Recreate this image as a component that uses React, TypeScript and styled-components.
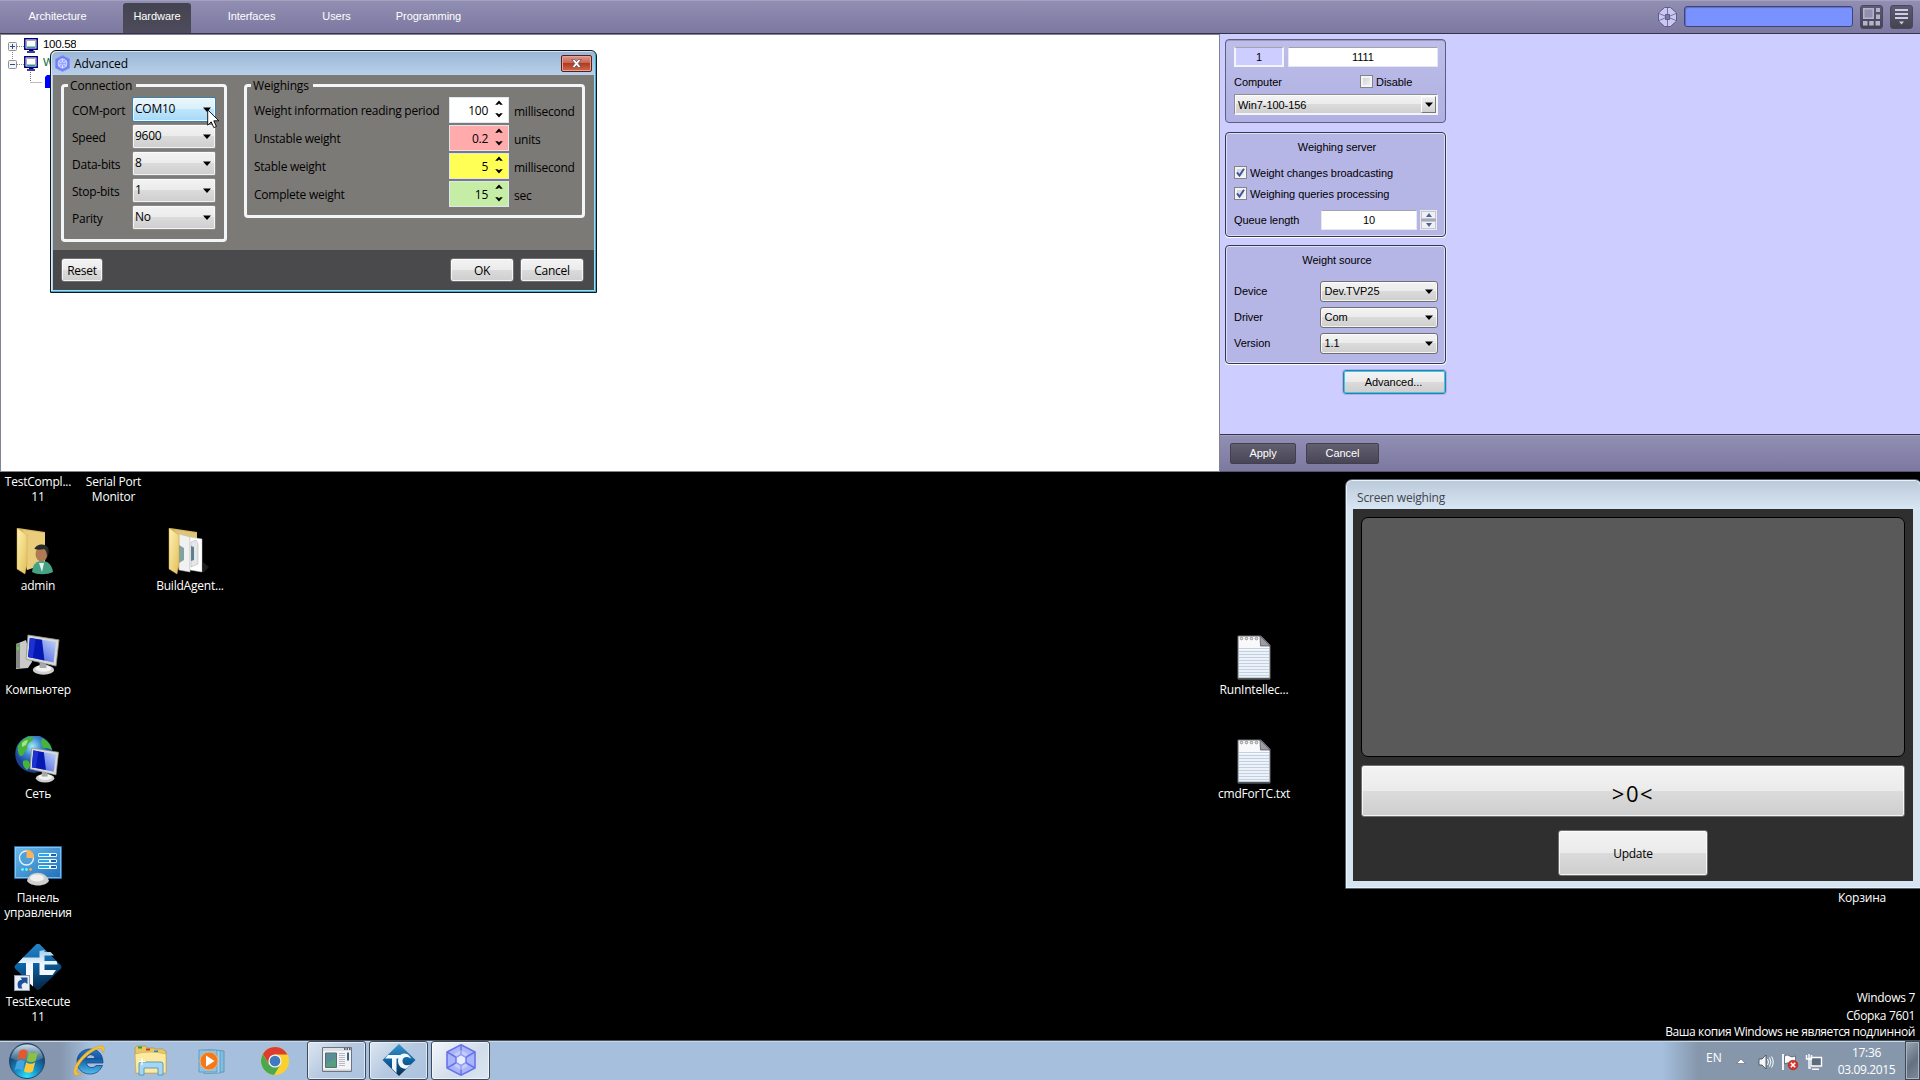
import React from "react";
import styled, { createGlobalStyle, css } from "styled-components";

const Global = createGlobalStyle`
  * { box-sizing: border-box; }
  html, body { margin: 0; padding: 0; background: #000; overflow: hidden; }
`;

const sans = `"Liberation Sans", Arial, sans-serif`;
const segoe = `"Open Sans", "Noto Sans", sans-serif`;

const glossy = css`
  background: linear-gradient(#f3f3f3 0%, #ebebeb 49%, #dbdbdb 50%, #cecece 100%);
  box-shadow: inset 0 0 0 1px rgba(255, 255, 255, 0.75);
`;

/* ---------- Desktop ---------- */
const Screen = styled.div`
  position: relative;
  width: 1920px;
  height: 1080px;
  background: #000;
  overflow: hidden;
  display: flex;
  flex-direction: column;
  font-family: ${segoe};
  font-size: 12px;
`;
const DesktopArea = styled.div`
  flex: 1;
`;
const Shortcut = styled.div<{ $x: number; $y: number }>`
  position: absolute;
  left: ${(p) => p.$x - 45}px;
  top: ${(p) => p.$y}px;
  width: 90px;
  display: flex;
  flex-direction: column;
  align-items: center;
`;
const ShortcutLabel = styled.span`
  color: #fff;
  font-size: 12px;
  line-height: 15px;
  text-align: center;
  white-space: pre;
  letter-spacing: -0.22px;
`;
const Art = styled.div`
  width: 48px;
  height: 48px;
  margin-bottom: 2px;
`;

/* ---------- Configuration window ---------- */
const AppWindow = styled.div`
  height: 472px;
  display: flex;
  flex-direction: column;
  font-family: ${sans};
  font-size: 11px;
  letter-spacing: -0.06px;
  color: #000;
`;
const TopBar = styled.div`
  height: 34px;
  display: flex;
  align-items: flex-end;
  padding-right: 7px;
  background: linear-gradient(#918eb3, #7c78a0);
  border-top: 1px solid #a3a1bd;
  border-bottom: 1px solid #35334a;
`;
const Tab = styled.div<{ $w: number; $active?: boolean }>`
  width: ${(p) => p.$w}px;
  height: 30px;
  display: flex;
  align-items: center;
  justify-content: center;
  padding-bottom: 5px;
  color: #fff;
  border-radius: 3px 3px 0 0;
  background: ${(p) => (p.$active ? "linear-gradient(#444351, #4e4c5c)" : "none")};
`;
const TabGap = styled.div`
  width: 8px;
`;
const Spacer = styled.div`
  flex: 1;
`;
const Tools = styled.div`
  display: flex;
  align-items: center;
  height: 32px;
  padding-bottom: 1px;
`;
const Search = styled.div`
  width: 169px;
  height: 21px;
  margin: 0 7px;
  border: 1px solid #3d4374;
  border-radius: 3px;
  background: #7a92ff;
  box-shadow: inset 1px 1px 1px #5c70c9;
`;
const ToolButton = styled.div`
  width: 23px;
  height: 24px;
  margin-right: 7px;
  border-radius: 3px;
  border: 1px solid #4a4860;
  background: linear-gradient(#5d5b72, #45434f);
  display: flex;
  align-items: center;
  justify-content: center;
  &:last-child { margin-right: 0; }
`;
const Main = styled.div`
  flex: 1;
  min-height: 0;
  display: flex;
`;
const Tree = styled.div`
  width: 1220px;
  border: 1px solid #83838f;
  background: #fff;
  padding: 1px 0 0 7px;
`;
const Node = styled.div`
  height: 18px;
  display: flex;
  align-items: center;
  color: #000;
`;
const NodeText = styled.span<{ $c?: string; $w?: number }>`
  color: ${(p) => p.$c ?? "#000"};
  width: ${(p) => (p.$w ? p.$w + "px" : "auto")};
  overflow: hidden;
  height: 13px;
  line-height: 13px;
  margin: 0 0 1px 4px;
  font-size: 11.5px;
  letter-spacing: -0.3px;
`;
const Side = styled.div`
  flex: 1;
  display: flex;
  flex-direction: column;
  background: #cdcdff;
`;
const SideBody = styled.div`
  flex: 1;
  padding: 5px 0 0 5px;
`;
const Box = styled.div<{ $h: number; $mb: number; $plain?: boolean }>`
  width: 221px;
  height: ${(p) => p.$h}px;
  margin-bottom: ${(p) => p.$mb}px;
  padding: 7px 7px 0 8px;
  border-radius: 4px;
  background: ${(p) => (p.$plain ? "linear-gradient(#bebeea, #b0b0e2)" : "#b5b5e6")};
  border: 1px solid ${(p) => (p.$plain ? "#5f5d80" : "#37374a")};
  box-shadow: ${(p) => (p.$plain ? "inset 0 1px 0 #9a99bd" : "inset 0 0 0 1px #dedef8, 0 1px 0 #fff, 1px 0 0 #e6e6ff")};
`;
const Line = styled.div<{ $h: number; $gap?: number; $pt?: number }>`
  height: ${(p) => p.$h}px;
  padding-top: ${(p) => p.$pt ?? 0}px;
  display: flex;
  align-items: center;
  gap: ${(p) => p.$gap ?? 0}px;
`;
const BoxTitle = styled.div<{ $h: number }>`
  height: ${(p) => p.$h}px;
  text-align: center;
  line-height: 15px;
  padding-left: 2px;
`;
const Label = styled.span<{ $w?: number; $up?: number }>`
  width: ${(p) => (p.$w ? p.$w + "px" : "auto")};
  padding-bottom: ${(p) => p.$up ?? 0}px;
  white-space: nowrap;
`;
const Edit = styled.div<{ $w: number; $bg?: string }>`
  width: ${(p) => p.$w}px;
  height: 20px;
  line-height: ${(p) => (p.$bg ? 18 : 19)}px;
  text-align: center;
  background: ${(p) => p.$bg ?? "#fff"};
  border: ${(p) => (p.$bg ? "2px solid #f4f4fc" : "1px solid #e6e6f4")};
  border-top: 1px solid #a2a2ae;
`;
const Check = styled.div`
  width: 13px;
  height: 13px;
  background: linear-gradient(135deg, #c9cdd4, #f6f6f6);
  border: 1px solid #83838b;
  box-shadow: inset 0 0 0 2px #f4f4f4;
  display: flex;
  align-items: center;
  justify-content: center;
`;
const Select = styled.div<{ $w: number; $sunken?: boolean }>`
  width: ${(p) => p.$w}px;
  height: 21px;
  padding: 0 4px;
  display: flex;
  align-items: center;
  justify-content: space-between;
  ${glossy}
  border: 1px solid #707070;
  border-radius: 3px;
  ${(p) => p.$sunken && css`
    border-color: #8e8e96 #f4f4fc #f4f4fc #8e8e96;
    border-radius: 0;
    padding: 0 1px 0 3px;
  `}
`;
const DropBox = styled.div`
  width: 15px;
  height: 17px;
  display: flex;
  align-items: center;
  justify-content: center;
  border: 1px solid #fff;
  border-right-color: #777;
  border-bottom-color: #777;
  background: linear-gradient(#f2f2f2, #d0d0d0);
`;
const Spin = styled.div`
  width: 17px;
  height: 20px;
  border: 1px solid #e9e9f3;
  display: flex;
  flex-direction: column;
  gap: 2px;
  background: #a8a8b6;
`;
const SpinHalf = styled.div`
  flex: 1;
  display: flex;
  align-items: center;
  justify-content: center;
  background: #f0f0f0;
  border: 1px solid #c5c5cd;
`;
const AdvButton = styled.div`
  width: 103px;
  height: 24px;
  margin: 6px 0 0 118px;
  padding-right: 2px;
  display: flex;
  align-items: center;
  justify-content: center;
  ${glossy}
  border: 1px solid #2e7ea5;
  border-radius: 3px;
  box-shadow: inset 0 0 0 1px #43c6ee, 0 0 0 1px #b2b2e0;
`;
const SideFooter = styled.div`
  height: 38px;
  display: flex;
  gap: 10px;
  padding: 8px 0 0 10px;
  border-top: 1px solid #35334a;
  border-bottom: 1px solid #55536e;
  background: linear-gradient(#928fb4, #7c78a0);
  box-shadow: inset 0 1px 0 #a3a1bd;
`;
const DarkButton = styled.div<{ $w: number }>`
  width: ${(p) => p.$w}px;
  height: 21px;
  line-height: 18px;
  text-align: center;
  color: #fff;
  border: 1px solid #42404f;
  border-radius: 2px;
  background: linear-gradient(#615f70, #484656);
`;

/* ---------- "Advanced" dialog ---------- */
const Dialog = styled.div`
  position: absolute;
  left: 50px;
  top: 50px;
  width: 547px;
  height: 243px;
  display: flex;
  flex-direction: column;
  padding: 1px 2px 1px 2px;
  border: 1px solid #0c1a22;
  border-radius: 6px 6px 0 0;
  background: linear-gradient(#9ab5d4, #b8d0ea 24px);
  box-shadow: inset -1px -1px 0 #2fb4d0, inset 1px 1px 0 #d6e6f4;
  color: #000;
  letter-spacing: -0.25px;
`;
const DialogTitle = styled.div`
  height: 23px;
  display: flex;
  align-items: center;
  padding: 0 2px 0 2px;
`;
const TitleText = styled.span`
  flex: 1;
  margin-left: 4px;
  letter-spacing: -0.1px;
`;
const Close = styled.div`
  width: 31px;
  height: 17px;
  display: flex;
  align-items: center;
  justify-content: center;
  border: 1px solid #5a1e1c;
  border-radius: 2px;
  box-shadow: inset 0 0 0 1px #e4a596;
  background: linear-gradient(#dc9a8d 0%, #c9624e 48%, #b13a22 50%, #cf6a4c 100%);
`;
const DialogBody = styled.div`
  height: 175px;
  background: #7c7a77;
  display: flex;
  align-items: flex-start;
  gap: 17px;
  padding: 2px 8px 0;
`;
const Group = styled.fieldset<{ $w: number; $h: number; $pl: number }>`
  width: ${(p) => p.$w}px;
  height: ${(p) => p.$h}px;
  margin: 0;
  min-width: 0;
  padding: 3px 0 0 ${(p) => p.$pl}px;
  border: 3px solid #f3f6f9;
  border-radius: 4px;
  legend {
    margin-left: ${(p) => 4 - p.$pl}px;
    padding: 0 4px 0 2px;
    line-height: 17px;
    letter-spacing: -0.18px;
  }
`;
const ConnRow = styled.div`
  height: 27px;
  display: grid;
  grid-template-columns: 60px 84px;
  align-items: start;
`;
const ConnLabel = styled.span`
  line-height: 28px;
  height: 27px;
  white-space: nowrap;
`;
const Combo = styled.div<{ $hot?: boolean }>`
  height: 25px;
  padding: 0 4px 0 2px;
  display: flex;
  justify-content: space-between;
  line-height: 22px;
  ${glossy}
  border: 1px solid #8a8a8a;
  border-radius: 2px;
  ${(p) => p.$hot && css`
    border-color: #3c7fb1;
    background: linear-gradient(#eaf6fd 0%, #d9f0fc 49%, #bee6fd 50%, #a7d9f5 100%);
  `}
  svg { margin-top: 9px; }
`;
const WeighRow = styled.div`
  height: 28px;
  display: grid;
  grid-template-columns: 195px 60px 1fr;
  align-items: start;
`;
const WeighLabel = styled.span<{ $unit?: boolean }>`
  line-height: ${(p) => (p.$unit ? 30 : 28)}px;
  height: 28px;
  padding-left: ${(p) => (p.$unit ? 5 : 0)}px;
  white-space: nowrap;
`;
const NumberBox = styled.div<{ $bg: string }>`
  height: 26px;
  display: flex;
  justify-content: flex-end;
  align-items: center;
  gap: 7px;
  padding: 0 5px 0 0;
  background: ${(p) => p.$bg};
  border: 1px solid #dfe6ee;
  svg { margin-bottom: 2px; }
`;
const DialogFooter = styled.div`
  height: 40px;
  background: #4a494b;
  display: flex;
  gap: 6px;
  padding: 8px 10px 0 8px;
`;
const Push = styled.div<{ $w: number }>`
  width: ${(p) => p.$w}px;
  height: 24px;
  line-height: 24px;
  text-align: center;
  ${glossy}
  border: 1px solid #707070;
  border-radius: 3px;
`;
const CursorLayer = styled.div`
  position: absolute;
  left: 207px;
  top: 109px;
`;

/* ---------- "Screen weighing" window ---------- */
const WeighWindow = styled.div`
  position: absolute;
  left: 1345px;
  top: 479px;
  width: 577px;
  height: 410px;
  padding: 0 8px 7px 7px;
  border: 1px solid #55606b;
  border-radius: 7px 7px 0 0;
  background: linear-gradient(#bac9d9, #d7e4f2 28px);
  box-shadow: inset 0 0 0 1px #eaf2fa;
  display: flex;
  flex-direction: column;
`;
const WeighTitle = styled.div`
  height: 29px;
  line-height: 36px;
  padding-left: 4px;
  color: #40474f;
  letter-spacing: -0.2px;
`;
const WeighBody = styled.div`
  flex: 1;
  min-height: 0;
  background: #2f2f2f;
  display: flex;
  flex-direction: column;
  align-items: center;
  padding: 8px 8px 0;
`;
const Display = styled.div`
  width: 544px;
  height: 240px;
  flex-shrink: 0;
  margin-bottom: 8px;
  background: #595959;
  border: 1px solid #000;
  border-radius: 7px;
`;
const BigButton = styled.div<{ $w: number; $h: number; $fs: number; $ls: number; $pt: number }>`
  width: ${(p) => p.$w}px;
  height: ${(p) => p.$h}px;
  flex-shrink: 0;
  margin-bottom: 13px;
  display: flex;
  align-items: center;
  justify-content: center;
  font-size: ${(p) => p.$fs}px;
  letter-spacing: ${(p) => p.$ls}px;
  padding-top: ${(p) => p.$pt}px;
  ${glossy}
  border: 1px solid #707070;
  border-radius: 3px;
  &:last-child { margin-bottom: 0; }
`;

/* ---------- Watermark and taskbar ---------- */
const Watermark = styled.div`
  position: absolute;
  right: 5px;
  top: 989px;
  color: #fff;
  text-align: right;
  white-space: nowrap;
  display: flex;
  flex-direction: column;
  align-items: flex-end;
`;
const WmLine = styled.span<{ $h: number; $ls: number }>`
  height: ${(p) => p.$h}px;
  line-height: 18px;
  letter-spacing: ${(p) => p.$ls}px;
`;
const Taskbar = styled.div`
  height: 40px;
  display: flex;
  align-items: center;
  border-top: 1px solid #4a525c;
  box-shadow: inset 0 1px 0 #c9d8e8;
  background: linear-gradient(90deg, #8596ae 0, #8596ae 60px, #a5bfdd 90px, #a5bfdd 1662px, #8697ac 1698px, #8697ac 100%);
`;
const Launch = styled.div<{ $w: number }>`
  width: ${(p) => p.$w}px;
  height: 38px;
  display: flex;
  align-items: center;
  justify-content: center;
`;
const TaskButton = styled.div<{ $active?: boolean }>`
  width: 59px;
  height: 39px;
  margin-right: 3px;
  padding-bottom: 2px;
  display: flex;
  align-items: center;
  justify-content: center;
  border: 1px solid #3f4b5c;
  border-radius: 3px;
  box-shadow: inset 0 0 0 1px rgba(255, 255, 255, 0.6);
  background: ${(p) => (p.$active ? "linear-gradient(135deg, #f3f6fa, #d0dcea 60%, #dce6f2)" : "linear-gradient(135deg, #dde6f1, #b4c8e0 50%, #adc3de)")};
`;
const BarGap = styled.div`
  width: 5px;
`;
const Tray = styled.div`
  width: 214px;
  height: 38px;
  display: flex;
  align-items: center;
  color: #fff;
`;
const Lang = styled.span`
  width: 30px;
  padding-bottom: 6px;
`;
const TrayIcon = styled.div<{ $w: number }>`
  width: ${(p) => p.$w}px;
  height: 18px;
  margin-top: 2px;
`;
const Clock = styled.div`
  flex: 1;
  text-align: center;
  line-height: 17px;
  font-size: 12px;
  letter-spacing: -0.35px;
  white-space: pre-line;
`;
const Peek = styled.div`
  width: 15px;
  height: 39px;
  border: 1px solid #3e4854;
  background: linear-gradient(135deg, #9aa6b4, #64707f 55%, #7f8b9a);
  box-shadow: inset 0 0 0 1px #a9b4c1;
`;

/* ---------- Drawings ---------- */
const Caret = ({ c = "#000" }: { c?: string }) => (
  <svg width="8" height="5" viewBox="0 0 8 5"><path d="M0 0.5h8L4 5z" fill={c} /></svg>
);
const Up = ({ c }: { c: string }) => (
  <svg width="6" height="4" viewBox="0 0 6 4"><path d="M0 4h6L3 0z" fill={c} /></svg>
);
const Down = ({ c }: { c: string }) => (
  <svg width="6" height="4" viewBox="0 0 6 4"><path d="M0 0h6L3 4z" fill={c} /></svg>
);
const Arrows = () => (
  <svg width="8" height="18" viewBox="0 0 8 18">
    <path d="M0.2 4.8L4 0.4l3.8 4.4H5.2L4 3.6 2.8 4.8zM0.2 13.2L4 17.6l3.8-4.4H5.2L4 14.4 2.8 13.2z" fill="#000" />
  </svg>
);
const Tick = () => (
  <svg width="9" height="9" viewBox="0 0 9 9"><path d="M1 4.4L3.5 7.6 8 0.8" fill="none" stroke="#3b549c" strokeWidth="1.9" /></svg>
);
const Expander = ({ open }: { open?: boolean }) => (
  <svg width="16" height="18" viewBox="0 0 16 18">
    <path d={open ? "M4.5 0v5M9 10.5h7" : "M4.5 14v4M9 10.5h7"} stroke="#888" strokeDasharray="1 1" />
    <rect x="0.5" y="6.500" width="8" height="8" rx="1" fill="#f4f4f4" stroke="#919191" />
    <path d="M2 10.5h5" stroke="#2b4a9a" />
    {!open && <path d="M4.5 8v5" stroke="#2b4a9a" />}
  </svg>
);
const PcIcon = () => (
  <svg width="15" height="15" viewBox="0 0 15 15">
    <path d="M0.800 0.800h12.400v10.400H0.800z" fill="#fff" stroke="#00007e" strokeWidth="1.500" />
    <path d="M2.500 2.500h9v6.500h-9z" fill="#fff" stroke="#a9a9b8" />
    <path d="M2.500 9.300h9" stroke="#0a8f88" strokeWidth="1" />
    <path d="M5 12.200h4.500M3 14h8" stroke="#00007e" strokeWidth="1.600" />
  </svg>
);
const DeviceLine = () => (
  <svg width="45" height="18" viewBox="0 0 45 18">
    <path d="M22.500 0v10M22.500 10.500h12" stroke="#777" strokeDasharray="1 1" fill="none" />
    <path d="M37 5l2-2h6v13h-8z" fill="#00f" />
  </svg>
);
const Hexagon = ({ w, h, fill, line }: { w: number; h: number; fill: string; line: string }) => (
  <svg width={w} height={h} viewBox="0 0 30 32">
    <path d="M15 0.8L29 8v16L15 31.2 1 24V8z" fill={fill} stroke={line} strokeWidth="1.6" />
    <path d="M15 1v10M15 21v10M1 8l9.5 5.5M29 8l-9.5 5.5M1 24l9.5-5.5M29 24l-9.5-5.5" stroke={line} strokeWidth="1.5" />
    <path d="M15 10.5l5 2.8v5.4l-5 2.8-5-2.8v-5.4z" fill="#e8ecff" stroke={line} strokeWidth="1.4" />
    <path d="M15 6l7 4-2.5 3.5L15 11l-4.500 2.500L8 10zM15 26l7-4-2.500-3.500L15 21l-4.500-2.500L8 22z" fill="#fff" opacity=".3" />
  </svg>
);
const SearchHex = () => (
  <svg width="19" height="20" viewBox="0 0 19 20">
    <path d="M6.500 0.500h6L18.500 6v8l-6 5.500h-6L0.500 14V6z" fill="#c9c7f4" stroke="#5f5c86" />
    <path d="M9.500 1v6M9.500 13v6M1 6.500l6 2.500M18 6.500L12 9M1 13.500L7 11M18 13.500L12 11" stroke="#77749f" />
    <path d="M7.500 7.500h4v5h-4z" fill="#7a78a0" stroke="#5f5c86" />
  </svg>
);
const SmallHex = () => (
  <svg width="15" height="17" viewBox="0 0 15 17">
    <path d="M7.500 0.500L14.500 4v9L7.500 16.500 0.500 13V4z" fill="#6f7ef8" stroke="#8a96f4" />
    <circle cx="7.500" cy="8.500" r="4.300" fill="#98a6ff" stroke="#c5ceff" strokeWidth="1.200" />
    <path d="M7.500 3.500v10M3.200 6l8.600 5M11.800 6l-8.600 5" stroke="#e0e5ff" strokeWidth=".9" />
    <circle cx="7.500" cy="8.500" r="1.300" fill="#8fa0ff" />
  </svg>
);
const GridIcon = () => (
  <svg width="17" height="18" viewBox="0 0 17 18" fill="#b5b2cf">
    <path d="M0 0h11v11H0zM13 0h4v4h-4zM13 6.500h4v4.500h-4zM0 13h4.500v4.500H0zM6.200 13h4.500v4.500H6.200zM12.500 13H17v4.500h-4.500z" />
    <path d="M1.500 1.500h8v8h-8z" fill="#918fae" />
  </svg>
);
const MenuIcon = () => (
  <svg width="13" height="17" viewBox="0 0 13 17" fill="#cfcde6">
    <path d="M0 1h13v2H0zM0 5h13v2H0zM0 9h13v2H0zM4 13.500h5L6.500 16.500z" />
  </svg>
);
const Monitor = ({ x, y, s, id }: { x: number; y: number; s: number; id: string }) => (
  <g transform={`translate(${x} ${y}) scale(${s})`}>
    <defs>
      <linearGradient id={id} x1="0" y1="1" x2="1" y2="0">
        <stop offset="0" stopColor="#2a48d8" /><stop offset="1" stopColor="#c9d8ff" />
      </linearGradient>
    </defs>
    <ellipse cx="18" cy="36" rx="11" ry="5" fill="#cfcfcf" />
    <ellipse cx="18" cy="34.500" rx="8" ry="3.500" fill="#f2f2f2" />
    <path d="M14 27h7v7h-7z" fill="#a9a9a9" />
    <path d="M2 0l32 5-3 27L0 25z" fill="#d9d9d5" stroke="#8e8e8c" strokeWidth=".8" />
    <path d="M4 3l27 4.300-2.600 21L2.300 22.800z" fill={`url(#${id})`} />
    <path d="M4 3l12.500 2L19 26.300 2.300 22.800z" fill="#0618b4" />
    <path d="M4 3l6 1-3 19.800-4.700-1z" fill="#1a32d0" />
  </g>
);
const FolderArt = ({ user }: { user?: boolean }) => {
  const id = user ? "foldUser" : "foldDocs";
  return (
    <svg width="48" height="48" viewBox="0 0 48 48">
      <defs>
        <linearGradient id={id} x1="0" y1="0" x2="1" y2="1"><stop offset="0" stopColor="#fff3b4" /><stop offset="1" stopColor="#e3bf58" /></linearGradient>
      </defs>
      {!user && <path d="M37 45l6-6-6-5z" fill="#1d1d1d" />}
      <path d="M4 0l27 4v24l-18 14z" fill="#d9b65c" />
      <path d="M9 2l22 3v31L13 42z" fill={user ? "#e9cd7c" : "#dfc57b"} />
      {user ? (
        <>
          <path d="M18 44c1-9 5-11 10-11s10 3 11 11c-6 3-16 3-21 0z" fill="#46a284" />
          <path d="M25 35l3 9 2-9z" fill="#e8f3f0" />
          <ellipse cx="27.500" cy="26" rx="6" ry="7.500" fill="#b07a52" />
          <path d="M20.500 21c1-5 12-7 14 0 .5 3 0 6-1.500 8 0-4-1-7-3-8-3 1-6 1-9.500 0z" fill="#262a2b" />
        </>
      ) : (
        <>
          <path d="M13 6l11 3v35L13 42z" fill="#f1f1f1" stroke="#b5b5b5" strokeWidth=".5" />
          <path d="M13 17l5 3v12l-5 3z" fill="#7ea3a0" />
          <path d="M24 9l12 2v33l-12-2z" fill="#fff" stroke="#c2c2c2" strokeWidth=".5" />
          <path d="M25 14l5-2 2 4v20l-7 3z" fill="#e6e8e8" stroke="#aab" strokeWidth=".5" />
          <path d="M25 18l3 1v13l-3 1z" fill="#5d7f90" />
        </>
      )}
      <path d="M3 0l10 7v28l-2 11L3 41z" fill={`url(#${id})`} stroke="#c9a448" strokeWidth=".5" />
    </svg>
  );
};
const ComputerArt = () => (
  <svg width="48" height="48" viewBox="0 0 48 48">
    <path d="M2 12l10-4 6 22-4 6-12 1z" fill="#c9cac8" />
    <path d="M2 12l4-1v26l-4-1z" fill="#858785" /><path d="M3 15h2v3H3z" fill="#53e020" />
    <Monitor x={12} y={3} s={0.97} id="scrA" />
  </svg>
);
const NetworkArt = () => (
  <svg width="48" height="48" viewBox="0 0 48 48">
    <defs>
      <radialGradient id="globe" cx=".45" cy=".3"><stop offset="0" stopColor="#a6eaf8" /><stop offset=".5" stopColor="#3a86cf" /><stop offset="1" stopColor="#1d3f94" /></radialGradient>
    </defs>
    <circle cx="20" cy="18" r="18.800" fill="url(#globe)" />
    <path d="M4 10C8 2 15 0 19 1c1 4-3 4-5 7-2 2 1 4-2 6-3 3-2 6-5 6-2 0-4-5-3-11zM28 2c6 3 9 7 10 12l-5-2-4 0-2-5zM9 25c4-2 7 0 7 4 0 3-2 4-3 5-3-2-5-5-4-9z" fill="#45b53a" />
    <path d="M8 7c2-2 4-3 6-3l-2 5-4 2z" fill="#a5e58a" />
    <Monitor x={16} y={12} s={0.84} id="scrB" />
  </svg>
);
const PanelArt = () => (
  <svg width="48" height="48" viewBox="0 0 48 48">
    <defs><linearGradient id="cp" x1="0" y1="0" x2="1" y2="1"><stop offset="0" stopColor="#6dbbe9" /><stop offset="1" stopColor="#1f6fbd" /></linearGradient></defs>
    <g transform="translate(0 5)">
      <path d="M0.500 1.500h47v32h-47z" fill="url(#cp)" stroke="#2a6fa8" />
      <path d="M1.500 2.500h45v30h-45z" fill="none" stroke="#9fd4f2" strokeWidth=".7" />
      <circle cx="12.500" cy="13" r="7" fill="#4f9fd8" stroke="#e4f4fd" strokeWidth="1.300" />
      <path d="M12.500 13V4.500a7.500 7.500 0 017.500 8.500z" fill="#f8b45c" />
      {[8, 14, 20].map((y) => (
        <g key={y}><rect x="24" y={y} width="19" height="4" rx="1.500" fill="#e9f8ff" /><rect x="25" y={y + 1} width="10" height="2" fill="#29a8e6" /><rect x="37" y={y + 1} width="5" height="2" fill="#205fb0" /></g>
      ))}
      <circle cx="8.500" cy="24.500" r="1.400" fill="#5ff" /><circle cx="12.500" cy="24.500" r="1.400" fill="#5ff" /><circle cx="16.500" cy="24.500" r="1.400" fill="#fa4" />
      <path d="M13 36c2-11 19-11 22 0-4 6-18 6-22 0z" fill="#cfcfcd" /><ellipse cx="23" cy="33" rx="7" ry="3.500" fill="#f0f0ee" />
    </g>
  </svg>
);
const ExecuteArt = () => (
  <svg width="48" height="48" viewBox="0 0 48 48">
    <defs>
      <linearGradient id="te" x1="0" y1="0" x2="0.200" y2="1"><stop offset="0" stopColor="#2d8cd0" /><stop offset=".5" stopColor="#0b63a5" /><stop offset="1" stopColor="#072a4c" /></linearGradient>
      <linearGradient id="teHi" x1="0" y1="0" x2="0" y2="1"><stop offset="0" stopColor="#a4cdea" /><stop offset=".4" stopColor="#f2f8fd" /></linearGradient>
    </defs>
    <path d="M22 0.500q2-1.500 4 0L46.500 21q2 2 0 4L26 45q-2 2-4 0L1.500 25q-2-2 0-4z" fill="url(#te)" />
    <path d="M9 13.500h16.500V7l5-1v2h6l3.500 3.500h-9.500V17h12l1 3.500H30.500V26H42l-3.500 5H25.500V19H19v23.500L12 36V19H4z" fill="url(#teHi)" />
    <rect x="0.500" y="31.500" width="15" height="15" fill="#e9eef4" stroke="#8c98a5" />
    <path d="M4.500 44.500c-2-5-.5-8.500 3.500-8.700L6.500 33.500h7V40l-2.500-1.500C8 39.500 6.500 41 8.500 44.500z" fill="#1d4f9c" />
  </svg>
);
const NotepadArt = () => (
  <svg width="48" height="48" viewBox="0 0 48 48">
    <path d="M8 4h23l9 9v34H8z" fill="#eef1f7" stroke="#6c7075" />
    <path d="M9 5h21v9h9v4H9z" fill="#f9f9fc" />
    <path d="M9 16.500h30M9 19.500h30M9 22.500h30M9 25.500h30M9 28.500h30M9 31.500h30M9 34.500h30M9 37.500h30M9 40.500h30M9 43.500h30" stroke="#bfd2e3" />
    <path d="M30 4l10 10h-9.500z" fill="#9a9da3" stroke="#4c4f55" strokeWidth=".7" />
    <path d="M8 46.500h32" stroke="#4e565c" strokeWidth="1.500" />
    {[11.5, 16.5, 21.5, 26.5].map((x) => <circle key={x} cx={x} cy="6.500" r="1.300" fill="#ddd" stroke="#777" strokeWidth=".7" />)}
  </svg>
);
const StartOrb = () => (
  <svg width="38" height="38" viewBox="0 0 38 38">
    <defs>
      <radialGradient id="orb" cx=".5" cy=".95" r=".9"><stop offset="0" stopColor="#2fe3ff" /><stop offset=".4" stopColor="#1489c4" /><stop offset=".75" stopColor="#174b78" /><stop offset="1" stopColor="#3f6488" /></radialGradient>
      <linearGradient id="orbHi" x1="0" y1="0" x2="0" y2="1"><stop offset="0" stopColor="#e8f2f8" stopOpacity=".85" /><stop offset="1" stopColor="#9fb9cd" stopOpacity=".2" /></linearGradient>
    </defs>
    <circle cx="19" cy="19" r="17.500" fill="url(#orb)" stroke="#1f4666" />
    <path d="M3 16C5 6 12 2.500 19 2.500S33 6 35 16c-9 5-22 5-32 0z" fill="url(#orbHi)" />
    <path d="M11.500 9c3-2 5-2 8 0l-2.300 9c-3-2-5-2-8 0z" fill="#e4582c" />
    <path d="M21 9.800c3 2 6 2 9 0l-2.300 9c-3 2-6 2-9 0z" fill="#8bc044" />
    <path d="M8.800 19.500c3-2 5-2 8 0l-2.300 9c-3-2-5-2-8 0z" fill="#45a3e0" />
    <path d="M18.200 20.300c3 2 6 2 9 0l-2.300 9c-3 2-6 2-9 0z" fill="#fdc93a" />
  </svg>
);
const IeIcon = () => (
  <svg width="34" height="32" viewBox="0 0 34 32">
    <defs><linearGradient id="ie" x1="0" y1="0" x2="0" y2="1"><stop offset="0" stopColor="#2c77bd" /><stop offset=".4" stopColor="#1257a5" /><stop offset="1" stopColor="#4fc0ee" /></linearGradient></defs>
    <path d="M18 4c8 0 13 5 13 14H14.500c.5 5 7 6 9.500 2.500h6.500C28 26 24 29 18 29 10 29 5 23.500 5 16.500 5 9 11 4 18 4zm-3.500 9.500H23c-.5-5-8-5-8.500 0z" fill="url(#ie)" stroke="#0d3b78" strokeWidth=".7" />
    <path d="M3 30C-1 25 6 14 15 7 22 2 30-1 32 2c1 2 0 4-1 6 0-3-1-5-4-4.500C20 5 6 17 4.500 26c0 3 3 2.500 6 1C7 30 4 31 3 30z" fill="#f5c33a" stroke="#d79c1c" strokeWidth=".5" />
  </svg>
);
const ExplorerIcon = () => (
  <svg width="34" height="32" viewBox="0 0 34 32">
    <path d="M1 3l2-2h9l1 2h7l1 1h8l2 2h1v22H2z" fill="#e8c865" stroke="#b59440" strokeWidth=".7" />
    <path d="M4 1.500h4v2H4z" fill="#2c9c3a" /><path d="M12 3.500h4v2h-4z" fill="#c04030" /><path d="M20 5.500h4v2h-4z" fill="#2c80c8" />
    <path d="M1 9q15-4 31 0v19H2z" fill="#fbeaa0" stroke="#cfae58" strokeWidth=".7" />
    <path d="M5 30V19q0-2 2-2h20q2 0 2 2v11h-5v-7H10v7z" fill="#a5d6f2" stroke="#4e94bf" strokeWidth=".9" />
    <path d="M8 13v7M4.500 16.500h7" stroke="#fff" strokeWidth="1.200" />
  </svg>
);
const MediaIcon = () => (
  <svg width="30" height="28" viewBox="0 0 30 28">
    <path d="M10 3l16 1v21l-16 1z" fill="#83bddd" stroke="#4f8fb6" strokeWidth=".8" />
    <path d="M6 3l16 .5V26L6 26.500z" fill="#a6d3ea" stroke="#5796bc" strokeWidth=".8" />
    <path d="M1 3h18v22H1z" fill="#8cc3e2" stroke="#5796bc" strokeWidth=".8" />
    <circle cx="11" cy="14" r="9" fill="#f07a1c" stroke="#f9b070" />
    <path d="M8 8.500v11l8.500-5.500z" fill="#fff" />
  </svg>
);
const ChromeIcon = () => (
  <svg width="30" height="30" viewBox="0 0 30 30">
    <circle cx="15" cy="15" r="14" fill="#fbd12d" />
    <path d="M15 8.400h12.400A14 14 0 002.900 8L9 18z" fill="#dc3d2e" />
    <path d="M2.900 8A14 14 0 0014 29l6.500-10.500L9 18.500z" fill="#4aa84e" />
    <circle cx="15" cy="15" r="6.600" fill="#f2f4f4" /><circle cx="15" cy="15" r="5.300" fill="#4079bd" />
  </svg>
);
const WindowIcon = () => (
  <svg width="30" height="26" viewBox="0 0 30 26">
    <path d="M0.500 0.500h29v24h-29z" fill="#f4f4f4" stroke="#6d7680" />
    <path d="M1 1h28v3H1z" fill="#dde1e6" /><path d="M22 2h1.500M24.500 2H26M27 2h1.500" stroke="#333" strokeWidth="1.300" />
    <path d="M3.500 6h11v14.500h-11z" fill="#55a07b" stroke="#5a6a78" /><path d="M4 6.500h10V11L4 17z" fill="#5d83a6" opacity=".7" />
    <path d="M17 6.500h6M17 8.500h6M17 10.500h6M17 12.500h6M17 14.500h6M17 16.500h6M17 18.500h6" stroke="#aab" strokeWidth=".8" />
    <path d="M25 5.500h2v8h-2z" fill="#2d6a90" /><path d="M1 22.500h28v1.500H1z" fill="#cbd0d6" />
  </svg>
);
const CompleteIcon = () => (
  <svg width="34" height="32" viewBox="0 0 34 32">
    <defs><linearGradient id="tc" x1="0" y1="0" x2="0" y2="1"><stop offset="0" stopColor="#3c93cc" /><stop offset=".5" stopColor="#0f66a4" /><stop offset="1" stopColor="#082c4c" /></linearGradient></defs>
    <path d="M17 0l16.500 16L17 32 .5 16z" fill="url(#tc)" />
    <path d="M6 11h12v3.500h-3.500V29L10 24.500V14.500H3z" fill="#f2f8fd" />
    <path d="M26 10.500c-6-3-10 1.500-10 6.500s4 8.500 8.500 7.500l4-4c-5 2-8 0-8-3.500 0-4 4-5.500 9-2.500z" fill="#f2f8fd" />
  </svg>
);
const Cursor = () => (
  <svg width="13" height="20" viewBox="0 0 13 20">
    <path d="M0.700 0.800v15.400l3.500-3.400 2.600 5.800 2.600-1.100-2.600-5.700h5z" fill="#fff" stroke="#000" strokeWidth=".9" />
  </svg>
);
const Speaker = () => (
  <svg width="18" height="18" viewBox="0 0 18 18">
    <path d="M2 6h3l4-4v14l-4-4H2z" fill="#f4f6f8" stroke="#40474f" strokeWidth=".8" />
    <path d="M10.500 6q2 3 0 6M12.500 4.500q3 4.500 0 9M14.500 3.500q3.500 5.500 0 11" fill="none" stroke="#fff" />
  </svg>
);
const Flag = () => (
  <svg width="18" height="18" viewBox="0 0 18 18">
    <path d="M2 1v16" stroke="#fff" strokeWidth="1.800" /><path d="M3.500 3q3-2 5 0t6 0v8q-3 1-5.500-.5t-5.500.5z" fill="#fff" stroke="#4a525b" strokeWidth=".7" />
    <circle cx="12" cy="12" r="4.800" fill="#d8352a" stroke="#a61d16" strokeWidth=".6" /><path d="M9.800 9.800l4.400 4.400M14.200 9.800l-4.400 4.400" stroke="#fff" strokeWidth="1.600" />
  </svg>
);
const Net = () => (
  <svg width="18" height="18" viewBox="0 0 18 18">
    <path d="M6 4.500h10.500v8.500H6z" fill="#5d6c7d" stroke="#fff" strokeWidth="1.400" /><path d="M7 16.200h7" stroke="#fff" strokeWidth="1.400" />
    <path d="M1.500 2v4h5V2M4 1v5M4 6v9h2" fill="none" stroke="#fff" strokeWidth="1.400" />
  </svg>
);

/* ---------- Data ---------- */
const connection: [string, string][] = [["COM-port", "COM10"], ["Speed", "9600"], ["Data-bits", "8"], ["Stop-bits", "1"], ["Parity", "No"]];
const weighings: [string, string, string, string][] = [
  ["Weight information reading period", "100", "#ffffff", "millisecond"],
  ["Unstable weight", "0.2", "#ffabab", "units"],
  ["Stable weight", "5", "#ffff56", "millisecond"],
  ["Complete weight", "15", "#c6eda6", "sec"],
];
const source: [string, string][] = [["Device", "Dev.TVP25"], ["Driver", "Com"], ["Version", "1.1"]];
const tabs: [string, number][] = [["Architecture", 115], ["Hardware", 68], ["Interfaces", 121], ["Users", 49], ["Programming", 135]];
const icons: { x: number; y: number; label: string; art?: React.ReactNode }[] = [
  { x: 38, y: 474, label: "TestCompl...\n11" },
  { x: 113.5, y: 474, label: "Serial Port\nMonitor" },
  { x: 38, y: 528, label: "admin", art: <FolderArt user /> },
  { x: 190, y: 528, label: "BuildAgent...", art: <FolderArt /> },
  { x: 38, y: 632, label: "Компьютер", art: <ComputerArt /> },
  { x: 38, y: 736, label: "Сеть", art: <NetworkArt /> },
  { x: 38, y: 840, label: "Панель\nуправления", art: <PanelArt /> },
  { x: 38, y: 944, label: "TestExecute\n11", art: <ExecuteArt /> },
  { x: 1254, y: 632, label: "RunIntellec...", art: <NotepadArt /> },
  { x: 1254, y: 736, label: "cmdForTC.txt", art: <NotepadArt /> },
  { x: 1862, y: 890, label: "Корзина" },
];

export default function App() {
  return (
    <>
      <Global />
      <Screen>
        <AppWindow>
          <TopBar>
            {tabs.map(([t, w], i) => (
              <React.Fragment key={t}>
                <Tab $w={w} $active={i === 1}>{t}</Tab>
                {i === 0 && <TabGap />}
              </React.Fragment>
            ))}
            <Spacer />
            <Tools>
              <SearchHex />
              <Search />
              <ToolButton><GridIcon /></ToolButton>
              <ToolButton><MenuIcon /></ToolButton>
            </Tools>
          </TopBar>
          <Main>
            <Tree>
              <Node><Expander /><PcIcon /><NodeText>100.58</NodeText></Node>
              <Node><Expander open /><PcIcon /><NodeText $c="#0a6e3c" $w={7}>W</NodeText></Node>
              <Node><DeviceLine /></Node>
            </Tree>
            <Side>
              <SideBody>
                <Box $h={84} $mb={9} $plain>
                  <Line $h={20} $gap={4}><Edit $w={50} $bg="#cdcdff">1</Edit><Edit $w={150}>1111</Edit></Line>
                  <Line $h={27} $gap={3} $pt={2}><Label $w={123}>Computer</Label><Check /><Label>Disable</Label></Line>
                  <Select $w={204} $sunken>Win7-100-156<DropBox><Caret /></DropBox></Select>
                </Box>
                <Box $h={105} $mb={8}>
                  <BoxTitle $h={22}>Weighing server</BoxTitle>
                  <Line $h={21} $gap={3}><Check><Tick /></Check><Label>Weight changes broadcasting</Label></Line>
                  <Line $h={21} $gap={3}><Check><Tick /></Check><Label>Weighing queries processing</Label></Line>
                  <Line $h={32} $gap={3}><Label $w={84}>Queue length</Label><Edit $w={96}>10</Edit><Spin><SpinHalf><Up c="#4a62a8" /></SpinHalf><SpinHalf><Down c="#4a62a8" /></SpinHalf></Spin></Line>
                </Box>
                <Box $h={119} $mb={5}>
                  <BoxTitle $h={25}>Weight source</BoxTitle>
                  {source.map(([l, v]) => (
                    <Line key={l} $h={26}><Label $w={86} $up={1}>{l}</Label><Select $w={119}>{v}<Caret /></Select></Line>
                  ))}
                </Box>
                <AdvButton>Advanced...</AdvButton>
              </SideBody>
              <SideFooter>
                <DarkButton $w={66}>Apply</DarkButton>
                <DarkButton $w={73}>Cancel</DarkButton>
              </SideFooter>
            </Side>
          </Main>
        </AppWindow>

        <DesktopArea>
          {icons.map((ic) => (
            <Shortcut key={ic.label} $x={ic.x} $y={ic.y}>
              {ic.art && <Art>{ic.art}</Art>}
              <ShortcutLabel>{ic.label}</ShortcutLabel>
            </Shortcut>
          ))}
        </DesktopArea>

        <Dialog>
          <DialogTitle>
            <SmallHex />
            <TitleText>Advanced</TitleText>
            <Close>
              <svg width="11" height="9" viewBox="0 0 11 9"><path d="M0.800 0.600h3L5.500 2.700 7.200 0.600h3L7.200 4.500l3 3.900h-3L5.500 6.300 3.800 8.400h-3l3-3.900z" fill="#fff" stroke="#4a4a5a" strokeWidth=".7" /></svg>
            </Close>
          </DialogTitle>
          <DialogBody>
            <Group $w={166} $h={165} $pl={8}>
              <legend>Connection</legend>
              {connection.map(([l, v], i) => (
                <ConnRow key={l}><ConnLabel>{l}</ConnLabel><Combo $hot={i === 0}>{v}<Caret /></Combo></ConnRow>
              ))}
            </Group>
            <Group $w={341} $h={141} $pl={7}>
              <legend>Weighings</legend>
              {weighings.map(([l, v, bg, u]) => (
                <WeighRow key={l}><WeighLabel>{l}</WeighLabel><NumberBox $bg={bg}>{v}<Arrows /></NumberBox><WeighLabel $unit>{u}</WeighLabel></WeighRow>
              ))}
            </Group>
          </DialogBody>
          <DialogFooter>
            <Push $w={42}>Reset</Push>
            <Spacer />
            <Push $w={64}>OK</Push>
            <Push $w={64}>Cancel</Push>
          </DialogFooter>
        </Dialog>
        <CursorLayer><Cursor /></CursorLayer>

        <WeighWindow>
          <WeighTitle>Screen weighing</WeighTitle>
          <WeighBody>
            <Display />
            <BigButton $w={544} $h={52} $fs={22} $ls={1.6} $pt={3}>&gt;0&lt;</BigButton>
            <BigButton $w={150} $h={46} $fs={12} $ls={-0.3} $pt={1}>Update</BigButton>
          </WeighBody>
        </WeighWindow>

        <Watermark>
          <WmLine $h={18} $ls={-0.3}>Windows 7</WmLine>
          <WmLine $h={16} $ls={-0.35}>Сборка 7601</WmLine>
          <WmLine $h={18} $ls={-0.4}>Ваша копия Windows не является подлинной</WmLine>
        </Watermark>

        <Taskbar>
          <Launch $w={54}><StartOrb /></Launch>
          <Launch $w={70}><IeIcon /></Launch>
          <Launch $w={54}><ExplorerIcon /></Launch>
          <Launch $w={70}><MediaIcon /></Launch>
          <Launch $w={54}><ChromeIcon /></Launch>
          <BarGap />
          <TaskButton><WindowIcon /></TaskButton>
          <TaskButton><CompleteIcon /></TaskButton>
          <TaskButton $active><Hexagon w={30} h={32} fill="#a9b6fb" line="#6a74ea" /></TaskButton>
          <Spacer />
          <Tray>
            <Lang>EN</Lang>
            <TrayIcon $w={21}><svg width="10" height="16" viewBox="0 0 10 16"><path d="M0.500 10.500h9L5 6z" fill="#fff" stroke="#5a6572" strokeWidth=".6" /></svg></TrayIcon>
            <TrayIcon $w={24}><Speaker /></TrayIcon>
            <TrayIcon $w={24}><Flag /></TrayIcon>
            <TrayIcon $w={23}><Net /></TrayIcon>
            <Clock>{"17:36\n03.09.2015"}</Clock>
            <Peek />
          </Tray>
        </Taskbar>
      </Screen>
    </>
  );
}
